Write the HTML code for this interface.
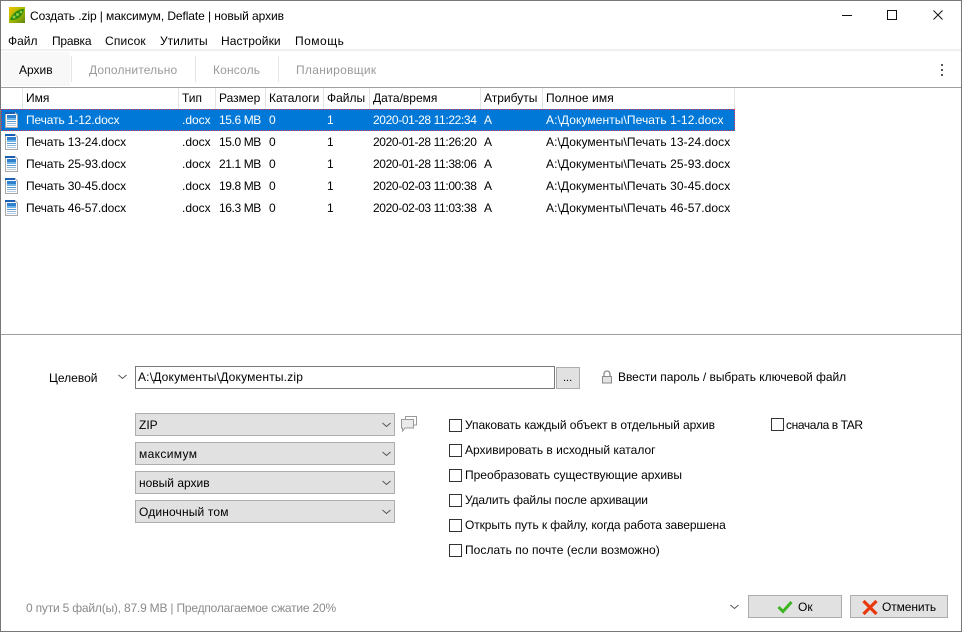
<!DOCTYPE html>
<html><head><meta charset="utf-8">
<style>
html,body{margin:0;padding:0;background:#fff}
#w{position:relative;width:962px;height:632px;overflow:hidden;background:#fff;font:12px/16px "Liberation Sans","Noto Sans CJK SC",sans-serif;color:#000}
#w div{position:absolute;white-space:nowrap}
.t{position:absolute;white-space:nowrap}
.g{color:#9a9a9a}
.sel{color:#fff}
.n{letter-spacing:-.12px}
.s{letter-spacing:-.4px}
.d{letter-spacing:-.37px}
.p{letter-spacing:.08px}
.combo{left:135px;width:258px;height:21px;background:#e1e1e1;border:1px solid #adadad}
.cb{left:449px;width:11px;height:11px;border:1px solid #333;background:#fff}
.btn{background:#e1e1e1;border:1px solid #adadad}
.sep{background:#e4e4e4;width:1px}
.dh{height:1px;background:repeating-linear-gradient(90deg,#e0304a 0,#e0304a 1px,#0078d7 1px,#0078d7 2px)}
.dv{width:1px;background:repeating-linear-gradient(180deg,#e0304a 0,#e0304a 1px,#0078d7 1px,#0078d7 2px)}
svg{position:absolute;overflow:visible}
</style></head><body>
<div id="w">
<div style="left:0;top:0;width:962px;height:1px;background:#777"></div>
<div style="left:0;top:0;width:1px;height:632px;background:#777"></div>
<div style="left:961px;top:0;width:1px;height:632px;background:#777"></div>
<div style="left:0;top:631px;width:962px;height:1px;background:#777"></div>

<!-- app icon -->
<svg style="left:9px;top:7px" width="16" height="16" viewBox="0 0 16 16"><defs><linearGradient id="a" x1="0" y1="0" x2="1" y2="1"><stop offset="0" stop-color="#f2c200"/><stop offset=".5" stop-color="#a8b800"/><stop offset="1" stop-color="#5a8a10"/></linearGradient></defs><rect width="16" height="16" fill="url(#a)"/><path d="M1 13C3 6 9 2 15 2C14 9 8 14 1 13Z" fill="#2f8a10"/><circle cx="5" cy="10" r="1.5" fill="#8fd040"/><circle cx="8.5" cy="7.500" r="1.500" fill="#8fd040"/><circle cx="12" cy="5" r="1.300" fill="#8fd040"/></svg>
<span class="t" style="left:30px;top:8px;letter-spacing:-.09px">Создать .zip | максимум, Deflate | новый архив</span>

<!-- window controls -->
<div style="left:842px;top:15px;width:10px;height:1px;background:#111"></div>
<div style="left:887px;top:10px;width:8px;height:8px;border:1px solid #111"></div>
<svg style="left:933px;top:10px" width="10" height="10" viewBox="0 0 10 10"><path d="M.5.5L9.500 9.500M9.500.5L.5 9.500" stroke="#111" fill="none"/></svg>

<!-- menu -->
<span class="t" style="left:8px;top:33px">Файл</span>
<span class="t" style="left:52px;top:33px;letter-spacing:-.2px">Правка</span>
<span class="t" style="left:105px;top:33px;letter-spacing:.15px">Список</span>
<span class="t" style="left:160px;top:33px">Утилиты</span>
<span class="t" style="left:221px;top:33px;letter-spacing:.1px">Настройки</span>
<span class="t" style="left:295px;top:33px;letter-spacing:.5px">Помощь</span>

<!-- toolbar -->
<div style="left:1px;top:49px;width:960px;height:2px;background:#f0f0f0"></div>
<div style="left:2px;top:52px;width:68px;height:34px;background:#f8f8f8"></div>
<div class="sep" style="left:71px;top:56px;height:26px"></div>
<div class="sep" style="left:195px;top:56px;height:26px"></div>
<div class="sep" style="left:278px;top:56px;height:26px"></div>
<span class="t" style="left:19px;top:62px">Архив</span>
<span class="t g" style="left:89px;top:62px;letter-spacing:.15px">Дополнительно</span>
<span class="t g" style="left:213px;top:62px;letter-spacing:.15px">Консоль</span>
<span class="t g" style="left:296px;top:62px;letter-spacing:.3px">Планировщик</span>
<div style="left:941px;top:64px;width:2px;height:2px;background:#555"></div>
<div style="left:941px;top:69px;width:2px;height:2px;background:#555"></div>
<div style="left:941px;top:74px;width:2px;height:2px;background:#555"></div>
<div style="left:1px;top:87px;width:960px;height:1px;background:#a0a0a0"></div>

<!-- header -->
<div class="sep" style="left:22px;top:88px;height:21px"></div>
<div class="sep" style="left:178px;top:88px;height:21px"></div>
<div class="sep" style="left:215px;top:88px;height:21px"></div>
<div class="sep" style="left:265px;top:88px;height:21px"></div>
<div class="sep" style="left:323px;top:88px;height:21px"></div>
<div class="sep" style="left:369px;top:88px;height:21px"></div>
<div class="sep" style="left:480px;top:88px;height:21px"></div>
<div class="sep" style="left:542px;top:88px;height:21px"></div>
<div class="sep" style="left:734px;top:88px;height:21px"></div>
<span class="t" style="left:26px;top:90px">Имя</span>
<span class="t" style="left:182px;top:90px">Тип</span>
<span class="t" style="left:219px;top:90px">Размер</span>
<span class="t" style="left:269px;top:90px">Каталоги</span>
<span class="t" style="left:327px;top:90px">Файлы</span>
<span class="t" style="left:373px;top:90px">Дата/время</span>
<span class="t" style="left:484px;top:90px">Атрибуты</span>
<span class="t" style="left:546px;top:90px;letter-spacing:.1px">Полное имя</span>

<!-- selected -->
<div style="left:1px;top:109px;width:734px;height:22px;background:#0078d7"></div>
<div class="dh" style="left:1px;top:109px;width:734px"></div>
<div class="dh" style="left:1px;top:130px;width:734px"></div>
<div class="dv" style="left:1px;top:109px;height:22px"></div>
<div class="dv" style="left:734px;top:109px;height:22px"></div>

<!-- icons -->
<svg style="left:5px;top:112px" width="13" height="16" viewBox="0 0 13 16"><path d="M.5.500H10L12.500 3V15.500H.5Z" fill="#fbfbfb" stroke="#a8a8a8"/><rect x="0" y="0" width="10" height="2" fill="#1b5fb5"/><rect x="2" y="3" width="9" height="3" fill="#2f80cf"/><rect x="2" y="6" width="9" height="2" fill="#6fb4e6"/><rect x="2" y="9" width="9" height="1" fill="#5b9ad0"/><rect x="2" y="11" width="9" height="1" fill="#8ab6da"/><rect x="2" y="13" width="9" height="1" fill="#b7cfe4"/></svg>
<svg style="left:5px;top:134px" width="13" height="16" viewBox="0 0 13 16"><path d="M.5.500H10L12.500 3V15.500H.5Z" fill="#fbfbfb" stroke="#a8a8a8"/><rect x="0" y="0" width="10" height="2" fill="#1b5fb5"/><rect x="2" y="3" width="9" height="3" fill="#2f80cf"/><rect x="2" y="6" width="9" height="2" fill="#6fb4e6"/><rect x="2" y="9" width="9" height="1" fill="#5b9ad0"/><rect x="2" y="11" width="9" height="1" fill="#8ab6da"/><rect x="2" y="13" width="9" height="1" fill="#b7cfe4"/></svg>
<svg style="left:5px;top:156px" width="13" height="16" viewBox="0 0 13 16"><path d="M.5.500H10L12.500 3V15.500H.5Z" fill="#fbfbfb" stroke="#a8a8a8"/><rect x="0" y="0" width="10" height="2" fill="#1b5fb5"/><rect x="2" y="3" width="9" height="3" fill="#2f80cf"/><rect x="2" y="6" width="9" height="2" fill="#6fb4e6"/><rect x="2" y="9" width="9" height="1" fill="#5b9ad0"/><rect x="2" y="11" width="9" height="1" fill="#8ab6da"/><rect x="2" y="13" width="9" height="1" fill="#b7cfe4"/></svg>
<svg style="left:5px;top:178px" width="13" height="16" viewBox="0 0 13 16"><path d="M.5.500H10L12.500 3V15.500H.5Z" fill="#fbfbfb" stroke="#a8a8a8"/><rect x="0" y="0" width="10" height="2" fill="#1b5fb5"/><rect x="2" y="3" width="9" height="3" fill="#2f80cf"/><rect x="2" y="6" width="9" height="2" fill="#6fb4e6"/><rect x="2" y="9" width="9" height="1" fill="#5b9ad0"/><rect x="2" y="11" width="9" height="1" fill="#8ab6da"/><rect x="2" y="13" width="9" height="1" fill="#b7cfe4"/></svg>
<svg style="left:5px;top:200px" width="13" height="16" viewBox="0 0 13 16"><path d="M.5.500H10L12.500 3V15.500H.5Z" fill="#fbfbfb" stroke="#a8a8a8"/><rect x="0" y="0" width="10" height="2" fill="#1b5fb5"/><rect x="2" y="3" width="9" height="3" fill="#2f80cf"/><rect x="2" y="6" width="9" height="2" fill="#6fb4e6"/><rect x="2" y="9" width="9" height="1" fill="#5b9ad0"/><rect x="2" y="11" width="9" height="1" fill="#8ab6da"/><rect x="2" y="13" width="9" height="1" fill="#b7cfe4"/></svg>

<!-- rows -->
<span class="t sel n" style="left:26px;top:112px">Печать 1-12.docx</span><span class="t sel" style="left:182px;top:112px">.docx</span><span class="t sel s" style="left:219px;top:112px">15.6 MB</span><span class="t sel" style="left:269px;top:112px">0</span><span class="t sel" style="left:327px;top:112px">1</span><span class="t sel d" style="left:373px;top:112px">2020-01-28 11:22:34</span><span class="t sel" style="left:484px;top:112px">A</span><span class="t sel p" style="left:546px;top:112px">A:\Документы\Печать 1-12.docx</span>

<span class="t n" style="left:26px;top:134px">Печать 13-24.docx</span><span class="t" style="left:182px;top:134px">.docx</span><span class="t s" style="left:219px;top:134px">15.0 MB</span><span class="t" style="left:269px;top:134px">0</span><span class="t" style="left:327px;top:134px">1</span><span class="t d" style="left:373px;top:134px">2020-01-28 11:26:20</span><span class="t" style="left:484px;top:134px">A</span><span class="t p" style="left:546px;top:134px">A:\Документы\Печать 13-24.docx</span>

<span class="t n" style="left:26px;top:156px">Печать 25-93.docx</span><span class="t" style="left:182px;top:156px">.docx</span><span class="t s" style="left:219px;top:156px">21.1 MB</span><span class="t" style="left:269px;top:156px">0</span><span class="t" style="left:327px;top:156px">1</span><span class="t d" style="left:373px;top:156px">2020-01-28 11:38:06</span><span class="t" style="left:484px;top:156px">A</span><span class="t p" style="left:546px;top:156px">A:\Документы\Печать 25-93.docx</span>

<span class="t n" style="left:26px;top:178px">Печать 30-45.docx</span><span class="t" style="left:182px;top:178px">.docx</span><span class="t s" style="left:219px;top:178px">19.8 MB</span><span class="t" style="left:269px;top:178px">0</span><span class="t" style="left:327px;top:178px">1</span><span class="t d" style="left:373px;top:178px">2020-02-03 11:00:38</span><span class="t" style="left:484px;top:178px">A</span><span class="t p" style="left:546px;top:178px">A:\Документы\Печать 30-45.docx</span>

<span class="t n" style="left:26px;top:200px">Печать 46-57.docx</span><span class="t" style="left:182px;top:200px">.docx</span><span class="t s" style="left:219px;top:200px">16.3 MB</span><span class="t" style="left:269px;top:200px">0</span><span class="t" style="left:327px;top:200px">1</span><span class="t d" style="left:373px;top:200px">2020-02-03 11:03:38</span><span class="t" style="left:484px;top:200px">A</span><span class="t p" style="left:546px;top:200px">A:\Документы\Печать 46-57.docx</span>

<div style="left:1px;top:334px;width:960px;height:1px;background:#a0a0a0"></div>

<!-- target -->
<span class="t" style="left:49px;top:370px">Целевой</span>
<svg style="left:118px;top:374px" width="9" height="6" viewBox="0 0 9 6"><path d="M.5 1L4.500 4.500L8.500 1" stroke="#555" fill="none"/></svg>
<div style="left:135px;top:366px;width:418px;height:21px;border:1px solid #7a7a7a;background:#fff"></div>
<span class="t" style="left:138px;top:369px;letter-spacing:.18px">A:\Документы\Документы.zip</span>
<div class="btn" style="left:556px;top:367px;width:22px;height:20px"></div>
<span class="t" style="left:563px;top:370px;font-size:11px">...</span>
<svg style="left:601px;top:370px" width="12" height="14" viewBox="0 0 12 14"><path d="M3 6V4a3 3 0 0 1 6 0v2" fill="none" stroke="#8a8a8a" stroke-width="1.300"/><rect x="1.500" y="6.500" width="9" height="6.500" fill="#e4e4e4" stroke="#8a8a8a"/></svg>
<span class="t" style="left:618px;top:369px;letter-spacing:-.03px">Ввести пароль / выбрать ключевой файл</span>

<!-- combos -->
<div class="combo" style="top:413px"></div>
<div class="combo" style="top:442px"></div>
<div class="combo" style="top:471px"></div>
<div class="combo" style="top:500px"></div>
<span class="t" style="left:139px;top:417px">ZIP</span>
<span class="t" style="left:139px;top:446px;letter-spacing:.35px">максимум</span>
<span class="t" style="left:139px;top:475px">новый архив</span>
<span class="t" style="left:139px;top:504px;letter-spacing:.15px">Одиночный том</span>
<svg style="left:382px;top:422px" width="9" height="6" viewBox="0 0 9 6"><path d="M.5 1L4.500 4.500L8.500 1" stroke="#555" fill="none"/></svg>
<svg style="left:382px;top:451px" width="9" height="6" viewBox="0 0 9 6"><path d="M.5 1L4.500 4.500L8.500 1" stroke="#555" fill="none"/></svg>
<svg style="left:382px;top:480px" width="9" height="6" viewBox="0 0 9 6"><path d="M.5 1L4.500 4.500L8.500 1" stroke="#555" fill="none"/></svg>
<svg style="left:382px;top:509px" width="9" height="6" viewBox="0 0 9 6"><path d="M.5 1L4.500 4.500L8.500 1" stroke="#555" fill="none"/></svg>
<svg style="left:401px;top:416px" width="16" height="16" viewBox="0 0 16 16"><path d="M4.500 3V.5H15.500V9H13" fill="none" stroke="#9a9a9a"/><path d="M.5 3.500H12.500V12H4L1.500 15V12H.5Z" fill="#ebebeb" stroke="#9a9a9a"/></svg>

<!-- checkboxes -->
<div class="cb" style="top:419px"></div><span class="t" style="left:465px;top:417px;letter-spacing:-.07px">Упаковать каждый объект в отдельный архив</span>
<div class="cb" style="top:444px"></div><span class="t" style="left:465px;top:442px">Архивировать в исходный каталог</span>
<div class="cb" style="top:469px"></div><span class="t" style="left:465px;top:467px">Преобразовать существующие архивы</span>
<div class="cb" style="top:494px"></div><span class="t" style="left:465px;top:492px;letter-spacing:-.13px">Удалить файлы после архивации</span>
<div class="cb" style="top:519px"></div><span class="t" style="left:465px;top:517px;letter-spacing:-.09px">Открыть путь к файлу, когда работа завершена</span>
<div class="cb" style="top:544px"></div><span class="t" style="left:465px;top:542px;letter-spacing:.06px">Послать по почте (если возможно)</span>
<div class="cb" style="left:771px;top:418px"></div><span class="t" style="left:786px;top:417px;letter-spacing:-.4px">сначала в TAR</span>

<!-- footer -->
<span class="t" style="left:26px;top:600px;color:#8a8a8a;letter-spacing:-.2px">0 пути 5 файл(ы), 87.9 MB | Предполагаемое сжатие 20%</span>
<svg style="left:730px;top:604px" width="9" height="6" viewBox="0 0 9 6"><path d="M.5 1L4.500 4.500L8.500 1" stroke="#555" fill="none"/></svg>
<div class="btn" style="left:748px;top:595px;width:92px;height:21px"></div>
<svg style="left:777px;top:600px" width="16" height="14" viewBox="0 0 16 14"><path d="M1.500 7L6 11.500L14.500 2" fill="none" stroke="#3cb521" stroke-width="3"/></svg>
<span class="t" style="left:798px;top:599px">Ок</span>
<div class="btn" style="left:850px;top:595px;width:96px;height:21px"></div>
<svg style="left:862px;top:600px" width="16" height="15" viewBox="0 0 16 15"><path d="M1.500 1L14.500 14M14.500 1L1.500 14" fill="none" stroke="#e8380d" stroke-width="3.200"/></svg>
<span class="t" style="left:882px;top:599px;letter-spacing:-.1px">Отменить</span>
</div>
</body></html>
